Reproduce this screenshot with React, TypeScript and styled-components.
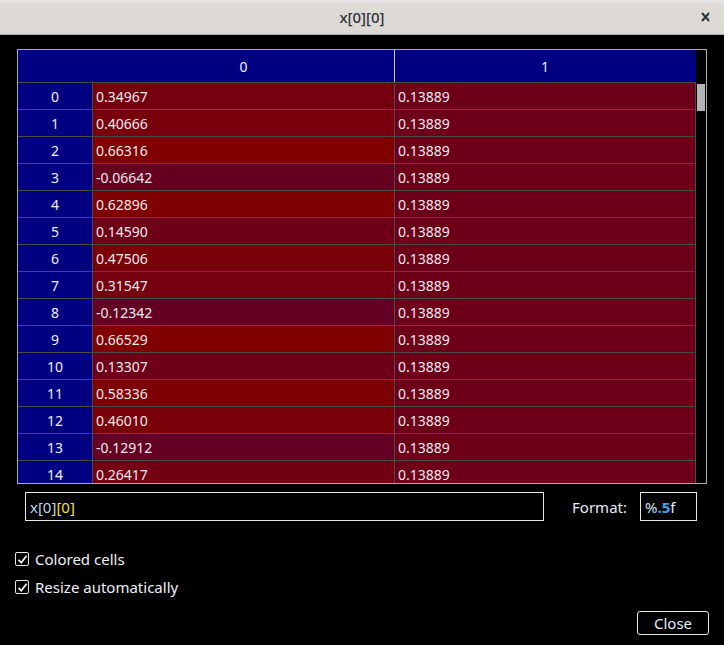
import React from "react";
import styled, { createGlobalStyle } from "styled-components";

const Global = createGlobalStyle`
  html, body { margin: 0; padding: 0; background: #000; }
  body { font-family: "Noto Sans", "Open Sans", sans-serif; color: #e6e8ec; }
  * { box-sizing: border-box; }
`;

const Window = styled.div`
  width: 724px;
  height: 645px;
  background: #000;
  display: flex;
  flex-direction: column;
  overflow: hidden;
`;

const TitleBar = styled.div`
  height: 35px;
  flex: none;
  background: linear-gradient(#e9e5e3 0px, #dedbd7 6px, #dcd9d5 100%);
  border-bottom: 1px solid #b3afab;
  display: flex;
  align-items: center;
  justify-content: center;
  position: relative;
  color: #2e3436;
  font-size: 15px;
  font-weight: 500;
`;

const TitleClose = styled.span`
  position: absolute;
  right: 14px;
  top: 12px;
  width: 9px;
  height: 10px;
  display: flex;
`;

const Body = styled.div`
  flex: 1;
  display: flex;
  flex-direction: column;
  padding: 14px 17px 0 17px;
`;

const Frame = styled.div`
  width: 690px;
  height: 435px;
  border: 1px solid #ababab;
  display: flex;
  overflow: hidden;
`;

const TableArea = styled.div`
  width: 678px;
  display: flex;
  flex-direction: column;
  overflow: hidden;
`;

const HeaderRow = styled.div`
  display: flex;
  height: 33px;
  flex: none;
  background: #000080;
  border-bottom: 1px solid #4a4a4a;
`;

const Corner = styled.div`
  width: 75px;
`;

const HeaderCell = styled.div<{ $w: number; $sep?: boolean }>`
  width: ${(p) => p.$w}px;
  display: flex;
  align-items: center;
  justify-content: center;
  font-size: 14px;
  color: #eef0ff;
  border-right: 1px solid ${(p) => (p.$sep ? "#c8c8c8" : "transparent")};
`;

const Row = styled.div`
  display: flex;
  height: 27px;
  flex: none;
  border-bottom: 1px solid #4a4a4a;
`;

const RowHead = styled.div`
  width: 75px;
  background: #000080;
  border-right: 1px solid #4a4a4a;
  display: flex;
  align-items: center;
  justify-content: center;
  font-size: 14px;
  color: #eef0ff;
`;

const Cell = styled.div<{ $w: number }>`
  width: ${(p) => p.$w}px;
  border-right: 1px solid #4a4a4a;
  display: flex;
  align-items: center;
  padding-left: 3px;
  font-size: 14px;
  color: #f0e8ea;
`;

const ScrollTrack = styled.div`
  width: 10px;
  padding: 1px 0 0 1px;
`;

const ScrollHandle = styled.div`
  width: 8px;
  height: 27px;
  margin-top: 33px;
  background: #b4b4b4;
`;

const BottomRow = styled.div`
  display: flex;
  align-items: center;
  margin-top: 8px;
  padding: 0 10px 0 8px;
  height: 29px;
`;

const ExprField = styled.div`
  width: 519px;
  height: 29px;
  border: 1px solid #e6e6e6;
  display: flex;
  align-items: center;
  padding-left: 4px;
  font-size: 15px;
`;

const Tok = styled.span<{ $c: string; $b?: boolean }>`
  color: ${(p) => p.$c};
  font-weight: ${(p) => (p.$b ? 700 : 400)};
`;

const FormatLabel = styled.span`
  margin-left: auto;
  font-size: 15px;
  margin-right: 13px;
  color: #e6ecf4;
`;

const FormatField = styled.div`
  width: 57px;
  height: 29px;
  border: 1px solid #e6e6e6;
  display: flex;
  align-items: center;
  padding-left: 4px;
  font-size: 15px;
`;

const Checks = styled.div`
  display: flex;
  flex-direction: column;
  gap: 14px;
  margin-top: 31px;
  margin-left: -2px;
`;

const CheckRow = styled.label`
  display: flex;
  align-items: center;
  gap: 6px;
  font-size: 15px;
  height: 14px;
  color: #eef2f8;
`;

const Box = styled.span`
  width: 14px;
  height: 14px;
  border: 1px solid #e8e8e8;
  border-radius: 2px;
  display: flex;
  align-items: center;
  justify-content: center;
`;

const Footer = styled.div`
  display: flex;
  justify-content: flex-end;
  margin-top: 17px;
  margin-right: -2px;
`;

const CloseButton = styled.button`
  width: 72px;
  height: 24px;
  background: #000;
  border: 1px solid #e8e8e8;
  border-radius: 3px;
  color: #e6ecf6;
  font-family: "Noto Sans", sans-serif;
  font-size: 15px;
  padding: 0;
  display: flex;
  align-items: center;
  justify-content: center;
`;

const col0 = [
  0.34967, 0.40666, 0.66316, -0.06642, 0.62896, 0.1459, 0.47506, 0.31547,
  -0.12342, 0.66529, 0.13307, 0.58336, 0.4601, -0.12912, 0.26417,
];
const col1 = 0.13889;

const VMIN = -0.13;
const VMAX = 0.665;
function colorFor(v: number) {
  let t = (v - VMIN) / (VMAX - VMIN);
  t = Math.max(0, Math.min(1, t));
  const r = Math.round(100 + t * 28);
  const b = Math.round(36 * (1 - t));
  return `rgb(${r},0,${b})`;
}

const Check = () => (
  <svg width="11" height="11" viewBox="0 0 11 11">
    <path d="M1.5 5.8 L4.3 8.6 L9.6 1.8" fill="none" stroke="#f0f0f0" strokeWidth="1.7" />
  </svg>
);

const CloseX = () => (
  <svg width="9" height="10" viewBox="0 0 9 10">
    <path d="M1 1 L8 9 M8 1 L1 9" fill="none" stroke="#2e3436" strokeWidth="2" />
  </svg>
);

export default function App() {
  return (
    <Window>
      <Global />
      <TitleBar>
        x[0][0]
        <TitleClose>
          <CloseX />
        </TitleClose>
      </TitleBar>
      <Body>
        <Frame>
          <TableArea>
            <HeaderRow>
              <Corner />
              <HeaderCell $w={302} $sep>0</HeaderCell>
              <HeaderCell $w={301}>1</HeaderCell>
            </HeaderRow>
            {col0.map((v, i) => (
              <Row key={i}>
                <RowHead>{i}</RowHead>
                <Cell $w={302} style={{ background: colorFor(v) }}>
                  {v.toFixed(5)}
                </Cell>
                <Cell $w={301} style={{ background: colorFor(col1) }}>
                  {col1.toFixed(5)}
                </Cell>
              </Row>
            ))}
          </TableArea>
          <ScrollTrack>
            <ScrollHandle />
          </ScrollTrack>
        </Frame>
        <BottomRow>
          <ExprField>
            <Tok $c="#bcd4ee">x[0]</Tok>
            <Tok $c="#f4e23a">[0]</Tok>
          </ExprField>
          <FormatLabel>Format:</FormatLabel>
          <FormatField>
            <Tok $c="#cfe2f6">%</Tok>
            <Tok $c="#37a8e8" $b>.5</Tok>
            <Tok $c="#e8eef6">f</Tok>
          </FormatField>
        </BottomRow>
        <Checks>
          <CheckRow>
            <Box><Check /></Box>
            Colored cells
          </CheckRow>
          <CheckRow>
            <Box><Check /></Box>
            Resize automatically
          </CheckRow>
        </Checks>
        <Footer>
          <CloseButton>Close</CloseButton>
        </Footer>
      </Body>
    </Window>
  );
}
